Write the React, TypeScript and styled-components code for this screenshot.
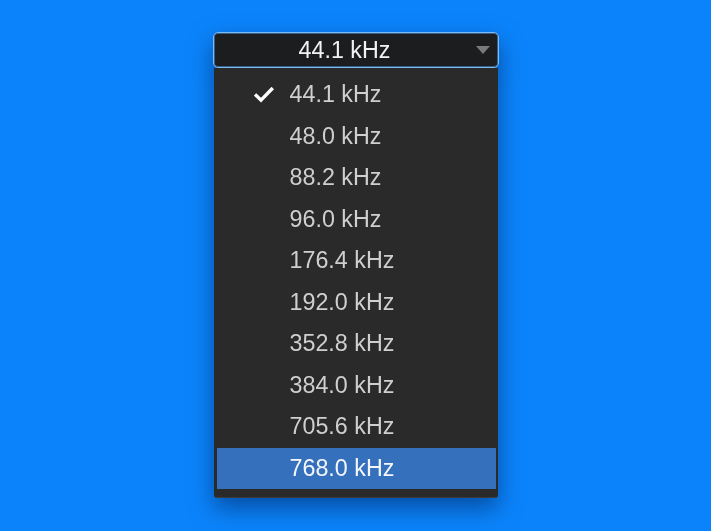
import React from "react";
import styled, { createGlobalStyle } from "styled-components";

const Global = createGlobalStyle`
  html, body {
    margin: 0;
    padding: 0;
    background: #0b84fb;
  }
  body {
    font-family: "Liberation Sans", Arial, sans-serif;
  }
`;

const Page = styled.div`
  width: 711px;
  height: 531px;
  display: flex;
  justify-content: center;
  padding-top: 32px;
  box-sizing: border-box;
  background: #0b84fb;
`;

const Picker = styled.div`
  width: 286px;
  display: flex;
  flex-direction: column;
  filter: drop-shadow(0 10px 12px rgba(0, 20, 70, 0.5));
`;

const Trigger = styled.div`
  height: 36px;
  box-sizing: border-box;
  border: 1px solid #7cbaf2;
  box-shadow: inset 0 0 0 1px rgba(80, 150, 225, 0.55);
  border-radius: 5px;
  background: #1c1d1f;
  display: flex;
  align-items: center;
  padding: 0 8px 0 0;
`;

const TriggerLabel = styled.span`
  flex: 1;
  text-align: center;
  color: #f2f2f2;
  font-size: 23.3px;
`;

const Caret = styled.span`
  width: 0;
  height: 0;
  border-left: 7.5px solid transparent;
  border-right: 7.5px solid transparent;
  border-top: 8px solid #7a7a7c;
`;

const Menu = styled.ul`
  list-style: none;
  margin: 0 1px;
  padding: 6px 2px 8px 3px;
  background: #2a2a2b;
  border-bottom: 1px solid #3b3b3d;
  border-radius: 0 0 3px 3px;
`;

const Item = styled.li<{ $active?: boolean }>`
  height: 41.5px;
  display: flex;
  align-items: center;
  padding-left: 37px;
  color: ${(p) => (p.$active ? "#f4f6fa" : "#cfcfcf")};
  background: ${(p) => (p.$active ? "#3570bd" : "transparent")};
  font-size: 23.3px;
`;

const CheckSlot = styled.span`
  width: 36px;
  display: flex;
  align-items: center;
`;

const rates = [
  "44.1 kHz",
  "48.0 kHz",
  "88.2 kHz",
  "96.0 kHz",
  "176.4 kHz",
  "192.0 kHz",
  "352.8 kHz",
  "384.0 kHz",
  "705.6 kHz",
  "768.0 kHz",
];

const Check = () => (
  <svg width="20" height="16" viewBox="0 0 20 16">
    <path
      d="M2.2 8.6 L7 13.2 L17.6 2.2"
      fill="none"
      stroke="#ffffff"
      strokeWidth="3.4"
      strokeLinecap="square"
    />
  </svg>
);

export default function App() {
  const selected = "44.1 kHz";
  const hovered = "768.0 kHz";
  return (
    <>
      <Global />
      <Page>
        <Picker>
          <Trigger>
            <TriggerLabel>{selected}</TriggerLabel>
            <Caret />
          </Trigger>
          <Menu>
            {rates.map((r) => (
              <Item key={r} $active={r === hovered}>
                <CheckSlot>{r === selected && <Check />}</CheckSlot>
                {r}
              </Item>
            ))}
          </Menu>
        </Picker>
      </Page>
    </>
  );
}
